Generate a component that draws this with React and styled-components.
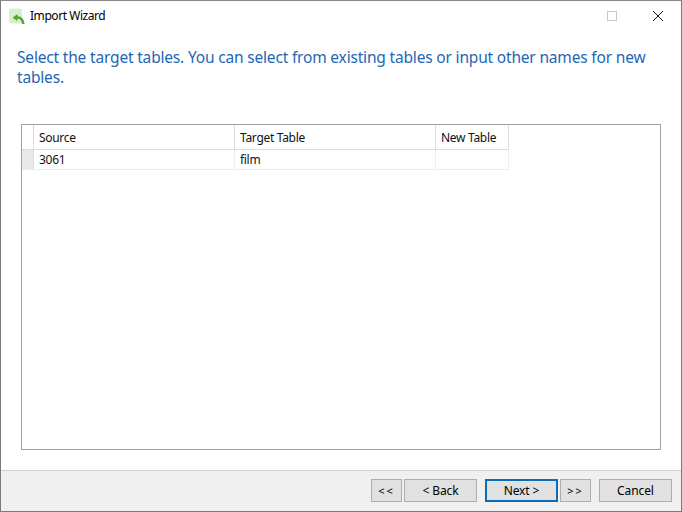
import React from "react";
import styled, { createGlobalStyle } from "styled-components";

const Global = createGlobalStyle`
  html, body { margin: 0; padding: 0; background: #fff; }
  body { font-family: "Noto Sans", "Open Sans", sans-serif; }
`;

const Win = styled.div`
  width: 682px; height: 512px; box-sizing: border-box;
  border: 1px solid #7a7a7a; border-top-color: #8a8a8a;
  display: flex; flex-direction: column; background: #fff; overflow: hidden;
`;
const TitleBar = styled.div`
  height: 30px; flex: none; display: flex; align-items: center; padding-left: 7px;
`;
const TitleText = styled.div`
  font-size: 12px; color: #000; margin-left: 4px; letter-spacing: -0.45px; margin-top: -1px;
`;
const Controls = styled.div`
  margin-left: auto; display: flex; height: 100%;
`;
const Ctl = styled.div`
  width: 46px; display: flex; align-items: center; justify-content: center; margin-top: -1px;
`;
const Heading = styled.h1`
  margin: 16px 16px 0 16px; padding: 0; font-weight: 400; font-size: 15.5px; line-height: 20px;
  color: #1f66b3; letter-spacing: -0.18px; flex: none;
`;
const Content = styled.div`
  flex: 1; min-height: 0; padding: 37px 20px 20px 20px; display: flex;
`;
const GridBox = styled.div`
  flex: 1; border: 1px solid #a0a0a0; background: #fff;
`;
const Row = styled.div`
  display: flex; height: ${p => p.$h}px; width: 487px; box-sizing: border-box;
  border-bottom: 1px solid ${p => p.$line};
`;
const RowHead = styled.div`
  width: 12px; flex: none; box-sizing: border-box; background: ${p => p.$bg};
  border-right: 1px solid #dcdcdc;
`;
const Cell = styled.div`
  width: ${p => p.$w}px; flex: none; box-sizing: border-box; padding-left: 5px;
  border-right: 1px solid ${p => p.$line};
  font-size: 12px; color: #111; display: flex; align-items: center; letter-spacing: -0.3px;
`;
const Footer = styled.div`
  height: 32px; flex: none; background: #f0f0f0; border-top: 1px solid #d0d0d0;
  display: flex; align-items: flex-start; justify-content: flex-end;
  padding: 8px 9px 0 0; box-sizing: content-box;
`;
const Btn = styled.button`
  width: ${p => p.$w}px; height: 23px; box-sizing: border-box; padding: 0 0 1px;
  margin-left: ${p => p.$gap}px;
  background: #e1e1e1; border: ${p => (p.$primary ? "2px solid #0b6cb8" : "1px solid #adadad")};
  font-family: inherit; font-size: ${p => (p.$arrows ? 11 : 12)}px; color: #000;
  letter-spacing: ${p => (p.$arrows ? "2px" : "-0.1px")};
`;

const Icon = () => (
  <svg width="18" height="16" viewBox="0 0 18 16">
    <rect x="1" y="0.5" width="13" height="15" rx="2" fill="#d8f0ca" />
    <path d="M9.5 6 L4.5 9.7 L9.5 13 V10.8 C12 10.6 13.5 12 14 16 L16.5 16 C16.3 11 13.5 8.2 9.5 8.2 Z" fill="#4ea72e" />
  </svg>
);

export default function App() {
  return (
    <Win>
      <Global />
      <TitleBar>
        <Icon />
        <TitleText>Import Wizard</TitleText>
        <Controls>
          <Ctl />
          <Ctl>
            <svg width="10" height="10" viewBox="0 0 10 10"><rect x="0.5" y="0.5" width="9" height="9" fill="none" stroke="#c8c8c8" /></svg>
          </Ctl>
          <Ctl>
            <svg width="10" height="10" viewBox="0 0 10 10"><path d="M0 0 L10 10 M10 0 L0 10" stroke="#111" strokeWidth="1" /></svg>
          </Ctl>
        </Controls>
      </TitleBar>
      <Heading>Select the target tables. You can select from existing tables or input other names for new tables.</Heading>
      <Content>
        <GridBox>
          <Row $h={25} $line="#dcdcdc">
            <RowHead $bg="#fff" />
            <Cell $w={201} $line="#dcdcdc">Source</Cell>
            <Cell $w={201} $line="#dcdcdc">Target Table</Cell>
            <Cell $w={73} $line="#dcdcdc">New Table</Cell>
          </Row>
          <Row $h={20} $line="#eeeeee">
            <RowHead $bg="#e8e8e8" />
            <Cell $w={201} $line="#eeeeee">3061</Cell>
            <Cell $w={201} $line="#eeeeee">film</Cell>
            <Cell $w={73} $line="#eeeeee" />
          </Row>
        </GridBox>
      </Content>
      <Footer>
        <Btn $w={31} $gap={0} $arrows>{"<<"}</Btn>
        <Btn $w={73} $gap={2}>{"< Back"}</Btn>
        <Btn $w={73} $gap={8} $primary>{"Next >"}</Btn>
        <Btn $w={31} $gap={2} $arrows>{">>"}</Btn>
        <Btn $w={73} $gap={8}>Cancel</Btn>
      </Footer>
    </Win>
  );
}
